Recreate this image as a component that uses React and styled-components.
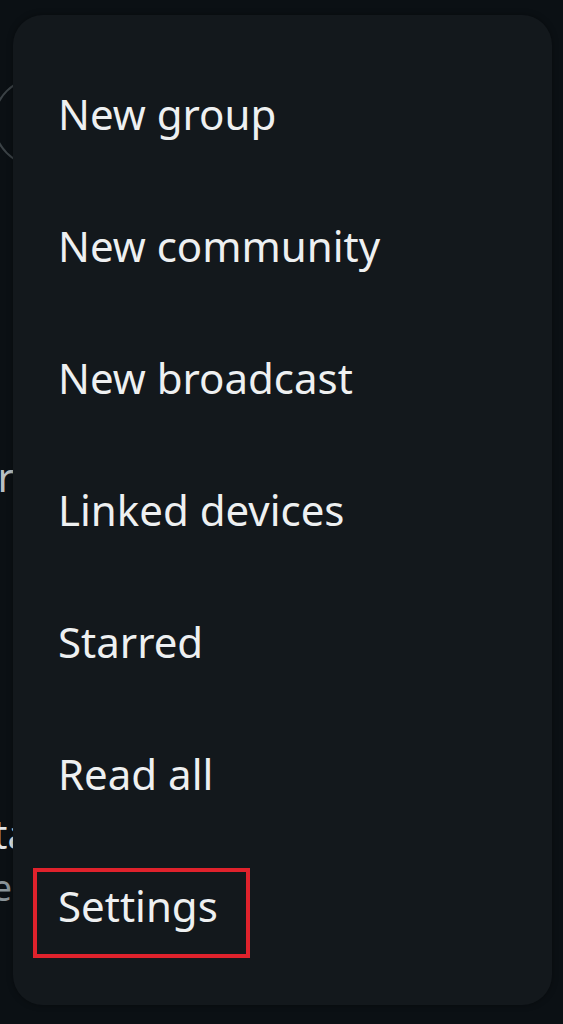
import React from "react";
import styled, { createGlobalStyle } from "styled-components";

const Global = createGlobalStyle`
  html, body { margin: 0; padding: 0; background: #0b1014; }
  body { font-family: "Noto Sans", "Open Sans", sans-serif; }
`;

const Screen = styled.div`
  position: relative;
  width: 563px;
  height: 1024px;
  overflow: hidden;
  background: #0b1014;
`;

const ChatList = styled.div`
  display: flex;
  flex-direction: column;
  padding-top: 77px;
`;

const Avatar = styled.div`
  width: 86px;
  height: 86px;
  margin-left: -7px;
  border-radius: 50%;
  border: 2px solid #3b4246;
`;

const BgLine = styled.div`
  width: ${(p) => p.$w}px;
  display: flex;
  justify-content: flex-end;
  font-size: ${(p) => p.$size || 40}px;
  line-height: 1;
  color: ${(p) => p.$color || "#b9bfc3"};
  margin-top: ${(p) => p.$mt || 0}px;
  white-space: nowrap;
`;

const Menu = styled.div`
  position: absolute;
  left: 13px;
  top: 15px;
  width: 539px;
  height: 990px;
  box-sizing: border-box;
  padding: 33px 0;
  border-radius: 30px;
  background: #13181c;
  box-shadow: 0 0 6px rgba(0, 0, 0, 0.35);
  display: flex;
  flex-direction: column;
`;

const Item = styled.div`
  position: relative;
  height: 132px;
  line-height: 132px;
  padding-left: 45px;
  font-size: 42px;
  color: #eef0f1;
  white-space: nowrap;
`;

const Highlight = styled.div`
  position: absolute;
  left: 20px;
  top: 28px;
  width: 217px;
  height: 90px;
  box-sizing: border-box;
  border: 4px solid #e0222c;
  pointer-events: none;
`;

const items = [
  "New group",
  "New community",
  "New broadcast",
  "Linked devices",
  "Starred",
  "Read all",
  "Settings",
];

export default function App() {
  return (
    <Screen>
      <Global />
      <ChatList>
        <Avatar />
        <BgLine $w={14} $mt={290}>Archiver</BgLine>
        <BgLine $w={30} $mt={317} $color="#e2e5e7">Sta</BgLine>
        <BgLine $w={12} $mt={16} $size={36} $color="#8a9499">Me</BgLine>
      </ChatList>
      <Menu>
        {items.map((label) => (
          <Item key={label}>
            {label}
            {label === "Settings" && <Highlight />}
          </Item>
        ))}
      </Menu>
    </Screen>
  );
}
